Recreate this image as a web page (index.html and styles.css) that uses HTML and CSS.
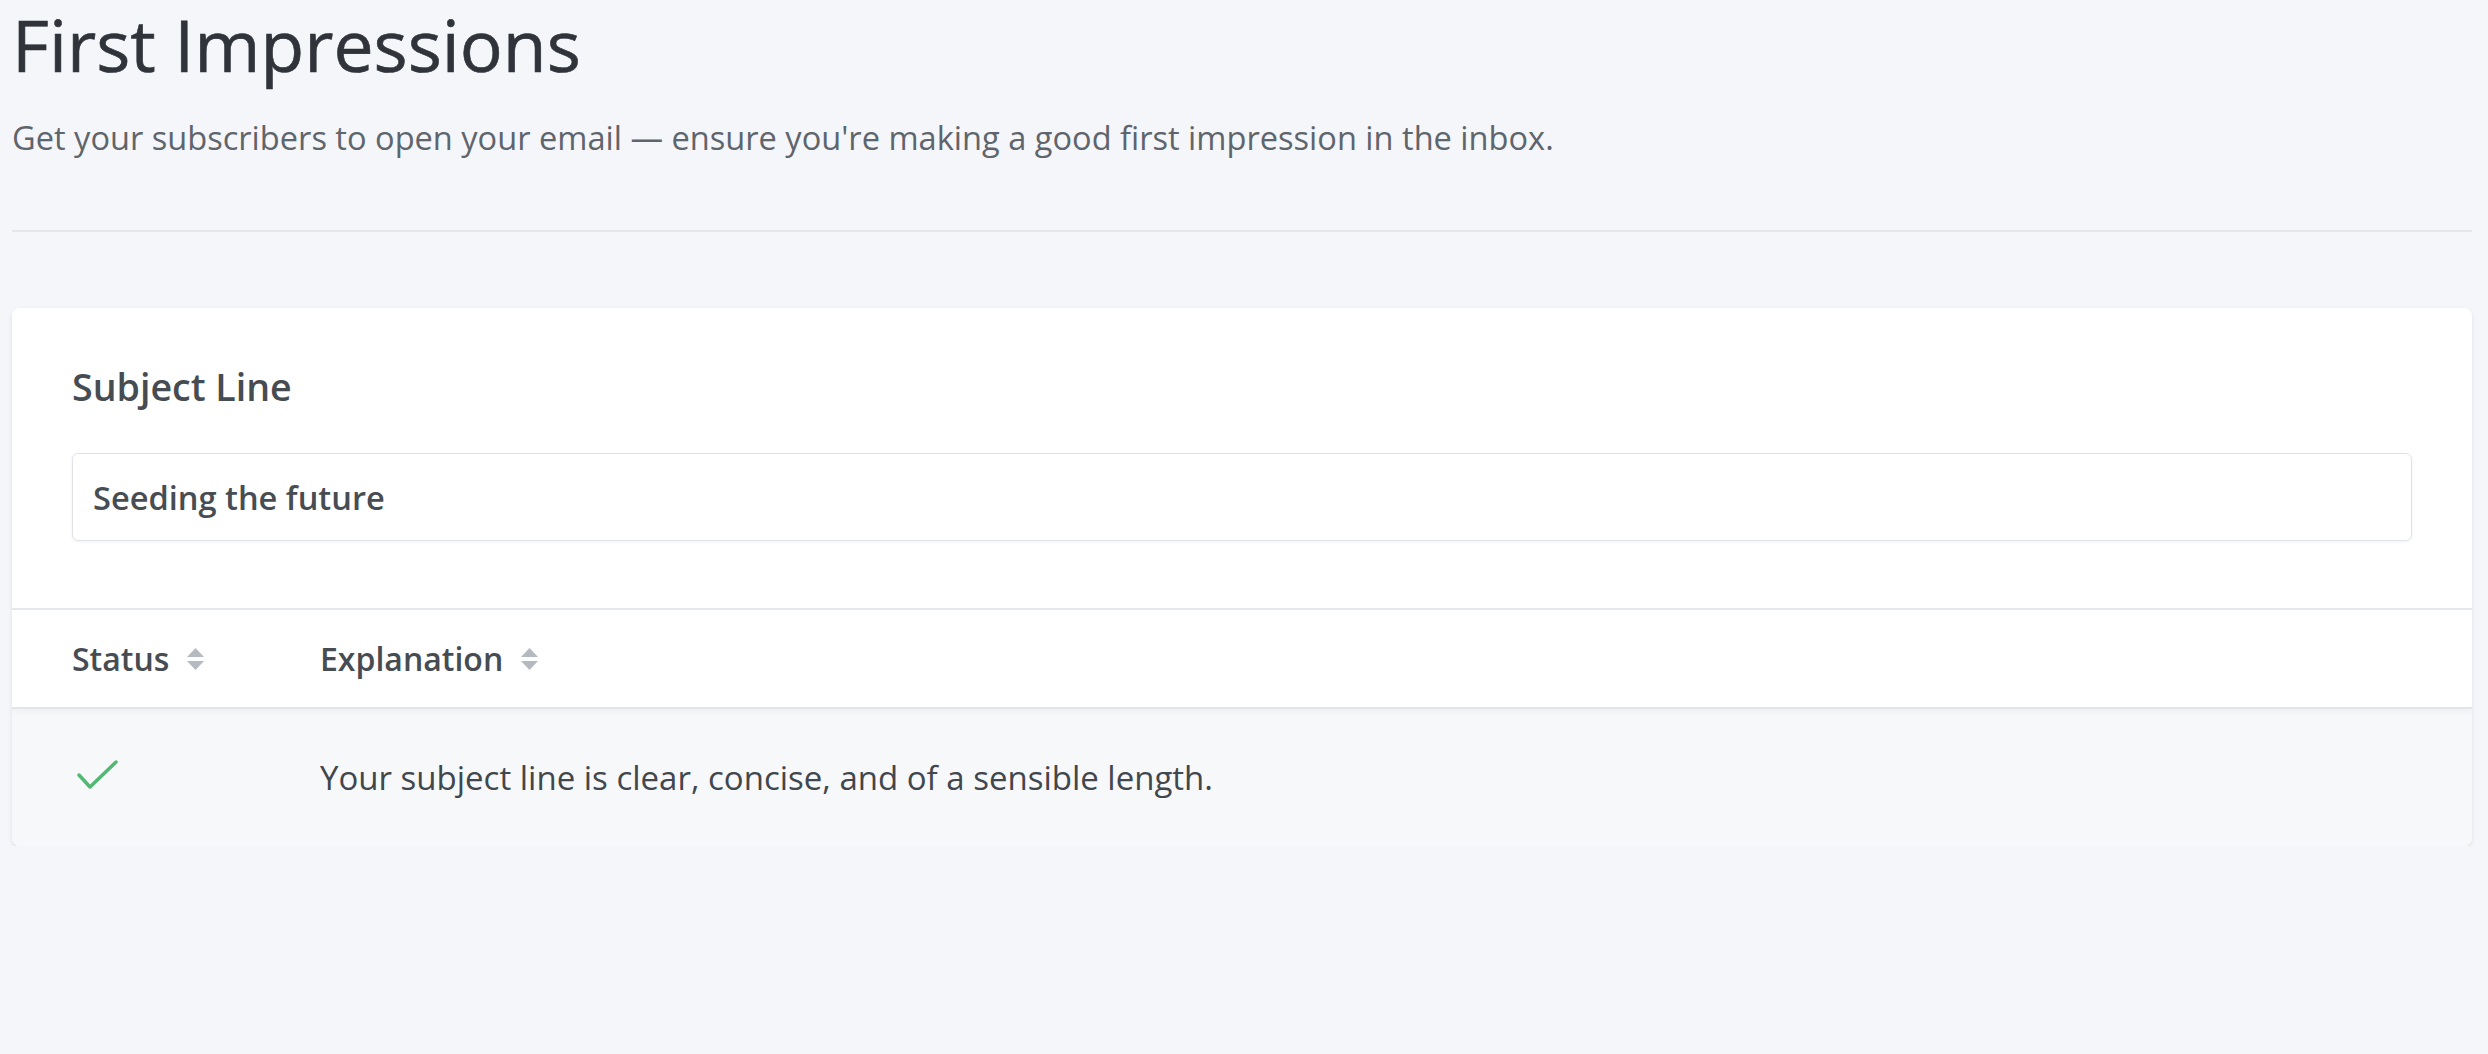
FILE: index.html
```html
<!DOCTYPE html>
<html lang="en">
<head>
<meta charset="utf-8">
<title>First Impressions</title>
<link rel="stylesheet" href="styles.css">
</head>
<body>
<div class="page">
  <header class="intro">
    <h1 class="title">First Impressions</h1>
    <p class="lead">Get your subscribers to open your email — ensure you're making a good first impression in the inbox.</p>
  </header>
  <hr class="rule">
  <section class="card">
    <div class="subject">
      <h2 class="label">Subject Line</h2>
      <div class="field">Seeding the future</div>
    </div>
    <div class="table">
      <div class="thead">
        <div class="th">Status
          <svg class="sort" viewBox="0 0 17 22" aria-hidden="true"><path d="M8.5 0 L17 9 L0 9 Z"/><path d="M0 13 L17 13 L8.5 22 Z"/></svg>
        </div>
        <div class="th">Explanation
          <svg class="sort" viewBox="0 0 17 22" aria-hidden="true"><path d="M8.5 0 L17 9 L0 9 Z"/><path d="M0 13 L17 13 L8.5 22 Z"/></svg>
        </div>
      </div>
      <div class="row">
        <div class="cell status">
          <svg class="check" viewBox="0 0 44 32" aria-hidden="true"><path d="M3 16 L14 28 L40 3"/></svg>
        </div>
        <div class="cell text">Your subject line is clear, concise, and of a sensible length.</div>
      </div>
    </div>
  </section>
</div>
</body>
</html>
```

FILE: styles.css
```css
html, body {
  margin: 0;
  padding: 0;
  background: #f5f6fa;
}

body {
  font-family: "Open Sans", "Lato", "Liberation Sans", sans-serif;
  color: #33373d;
}

.page {
  padding: 2px 16px 0 12px;
}

.title {
  margin: 0;
  font-size: 71.5px;
  line-height: 86px;
  font-weight: 400;
  color: #30343a;
  -webkit-text-stroke: 0.6px #30343a;
}

.lead {
  margin: 31px 0 0;
  font-size: 32.6px;
  line-height: 37px;
  color: #5e656c;
}

.rule {
  margin: 74px 0 0;
  border: 0;
  height: 2px;
  background: #e4e6ea;
}

.card {
  margin-top: 76px;
  background: #ffffff;
  border-radius: 8px;
  box-shadow: 0 2px 4px rgba(30, 40, 60, 0.10);
  overflow: hidden;
}

.subject {
  padding: 55px 60px 67px;
  border-bottom: 2px solid #e4e7eb;
}

.label {
  margin: 0;
  font-size: 37.6px;
  line-height: 47px;
  font-weight: 600;
  color: #464c52;
}

.field {
  margin-top: 43px;
  height: 86px;
  display: flex;
  align-items: center;
  padding: 0 20px;
  border: 1px solid #dfe2e6;
  border-radius: 6px;
  box-shadow: 0 1px 3px rgba(30, 40, 60, 0.06);
  font-size: 32.6px;
  font-weight: 600;
  color: #474d53;
}

.thead,
.row {
  display: grid;
  grid-template-columns: 248px 1fr;
  padding: 0 60px;
  align-items: center;
}

.thead {
  height: 97px;
  border-bottom: 2px solid #e1e4e8;
  box-shadow: 0 3px 5px rgba(30, 40, 60, 0.04);
  position: relative;
}

.th {
  display: flex;
  align-items: center;
  gap: 18px;
  font-size: 32px;
  font-weight: 600;
  color: #464c52;
}

.sort {
  width: 17px;
  height: 22px;
  fill: #b5b9c0;
}

.row {
  height: 137px;
  background: #f7f8fa;
}

.check {
  display: block;
  width: 44px;
  height: 32px;
  margin: 0 0 6px 4px;
  fill: none;
  stroke: #52b874;
  stroke-width: 3.5;
  stroke-linecap: round;
  stroke-linejoin: round;
}

.text {
  font-size: 33px;
  color: #41474d;
}
```
